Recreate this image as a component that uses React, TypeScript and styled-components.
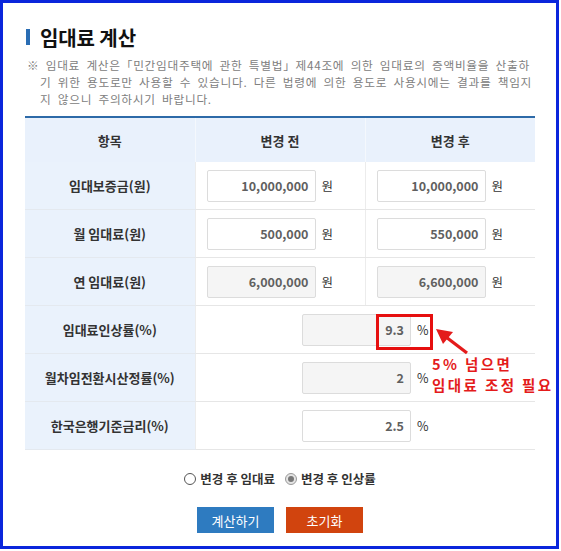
import React from "react";
import styled, { createGlobalStyle } from "styled-components";

const GlobalStyle = createGlobalStyle`
	html, body {
		margin: 0;
		padding: 0;
		background: #ffffff;
	}
	body {
		font-family: "Noto Sans CJK KR", "Noto Sans", sans-serif;
	}
`;

const Frame = styled.div`
	box-sizing: border-box;
	width: 559px;
	height: 549px;
	border: 3px solid #0a26dc;
	padding: 21px 0 0 22px;
`;

const TitleRow = styled.div`
	display: flex;
	align-items: center;
	gap: 10px;
	height: 26px;
`;

const TitleBar = styled.span`
	display: block;
	width: 4px;
	height: 16px;
	background: #2a6db4;
	margin-left: 1px;
`;

const Title = styled.h2`
	margin: 0;
	font-size: 20px;
	font-weight: 700;
	color: #111;
	letter-spacing: -0.1px;
`;

const Notice = styled.p`
	margin: 6px 0 0 2px;
	padding-left: 13px;
	text-indent: -13px;
	font-size: 11.7px;
	line-height: 17px;
	letter-spacing: 0.7px;
	word-spacing: 3px;
	color: #808080;
	white-space: nowrap;
`;

const Table = styled.table`
	margin-top: 9px;
	width: 510px;
	border-collapse: collapse;
	border-top: 2px solid #2d6aa8;
	table-layout: fixed;
`;

const HeadCell = styled.th`
	height: 44px;
	padding: 0;
	background: #e9f1fc;
	font-size: 13px;
	font-weight: 700;
	color: #333;
	border-left: 1px solid #f4f8fd;
	&:first-child {
		border-left: none;
	}
`;

const LabelCell = styled.td`
	height: 47px;
	padding: 0;
	background: #eaf2fc;
	text-align: center;
	font-size: 13px;
	font-weight: 700;
	color: #333;
	border-bottom: 1px solid #e4e9ef;
`;

const ValueCell = styled.td<{ $center?: boolean }>`
	height: 47px;
	padding: 0 0 0 ${(p) => (p.$center ? "0" : "11px")};
	text-align: ${(p) => (p.$center ? "center" : "left")};
	border-bottom: 1px solid #e6e6e6;
	border-left: 1px solid #ececec;
`;

const Field = styled.span`
	position: relative;
	display: inline-flex;
	align-items: center;
	gap: 6px;
`;

const NumInput = styled.input<{ $gray?: boolean }>`
	box-sizing: border-box;
	width: 109px;
	height: 32px;
	border: 1px solid #dcdcdc;
	border-radius: 2px;
	background: ${(p) => (p.$gray ? "#f5f5f5" : "#ffffff")};
	padding: 0 6px 0 4px;
	text-align: right;
	font-family: "Noto Sans CJK KR", "Noto Sans", sans-serif;
	font-size: 12.5px;
	font-weight: 700;
	color: #606060;
	outline: none;
`;

const Unit = styled.span`
	font-size: 12.5px;
	color: #333;
`;

const RedBox = styled.span`
	position: absolute;
	left: 74px;
	top: 0px;
	width: 57px;
	height: 36px;
	box-sizing: border-box;
	border: 3px solid #e60f0f;
	pointer-events: none;
`;

const Arrow = styled.svg`
	position: absolute;
	left: 130px;
	top: 10px;
`;

const Callout = styled.div`
	position: absolute;
	left: 130px;
	top: 39px;
	font-size: 14.5px;
	font-weight: 700;
	line-height: 21px;
	letter-spacing: 2.4px;
	color: #e41b1b;
	white-space: nowrap;
	text-align: left;
`;

const RadioRow = styled.div`
	display: flex;
	justify-content: center;
	align-items: center;
	gap: 10px;
	width: 510px;
	margin-top: 19px;
`;

const RadioLabel = styled.label`
	display: inline-flex;
	align-items: center;
	gap: 4px;
	font-size: 12.5px;
	font-weight: 700;
	color: #333;
`;

const RadioDot = styled.span<{ $checked?: boolean }>`
	position: relative;
	display: inline-block;
	box-sizing: border-box;
	width: 12px;
	height: 12px;
	border-radius: 50%;
	border: 1px solid ${(p) => (p.$checked ? "#999" : "#555")};
	background: ${(p) => (p.$checked ? "#e4e4e4" : "#fff")};
	&::after {
		content: "";
		display: ${(p) => (p.$checked ? "block" : "none")};
		position: absolute;
		left: 2px;
		top: 2px;
		width: 6px;
		height: 6px;
		border-radius: 50%;
		background: #777;
	}
`;

const ButtonRow = styled.div`
	display: flex;
	justify-content: center;
	gap: 12px;
	width: 510px;
	margin-top: 19px;
`;

const ActionButton = styled.button<{ $color: string }>`
	width: 77px;
	height: 26px;
	border: none;
	padding: 0;
	background: ${(p) => p.$color};
	color: #fff;
	font-family: "Noto Sans CJK KR", "Noto Sans", sans-serif;
	font-size: 13px;
`;

type MoneyRow = {
	label: string;
	before: string;
	after: string;
	gray?: boolean;
};

const moneyRows: MoneyRow[] = [
	{ label: "임대보증금(원)", before: "10,000,000", after: "10,000,000" },
	{ label: "월 임대료(원)", before: "500,000", after: "550,000" },
	{ label: "연 임대료(원)", before: "6,000,000", after: "6,600,000", gray: true },
];

const App = (): JSX.Element => (
	<>
		<GlobalStyle />
		<Frame>
			<TitleRow>
				<TitleBar />
				<Title>임대료 계산</Title>
			</TitleRow>
			<Notice>
				※ 임대료 계산은「민간임대주택에 관한 특별법」제44조에 의한 임대료의 증액비율을 산출하
				<br />
				기 위한 용도로만 사용할 수 있습니다. 다른 법령에 의한 용도로 사용시에는 결과를 책임지
				<br />
				지 않으니 주의하시기 바랍니다.
			</Notice>
			<Table>
				<thead>
					<tr>
						<HeadCell>항목</HeadCell>
						<HeadCell>변경 전</HeadCell>
						<HeadCell>변경 후</HeadCell>
					</tr>
				</thead>
				<tbody>
					{moneyRows.map((row) => (
						<tr key={row.label}>
							<LabelCell>{row.label}</LabelCell>
							<ValueCell>
								<Field>
									<NumInput readOnly value={row.before} $gray={row.gray} />
									<Unit>원</Unit>
								</Field>
							</ValueCell>
							<ValueCell>
								<Field>
									<NumInput readOnly value={row.after} $gray={row.gray} />
									<Unit>원</Unit>
								</Field>
							</ValueCell>
						</tr>
					))}
					<tr>
						<LabelCell>임대료인상률(%)</LabelCell>
						<ValueCell colSpan={2} $center>
							<Field>
								<NumInput readOnly value="9.3" $gray />
								<Unit>%</Unit>
								<RedBox />
								<Arrow width="40" height="32" viewBox="0 0 40 32">
									<line x1="14" y1="13" x2="35" y2="29" stroke="#e41b1b" strokeWidth="3.2" />
									<polygon points="4,5 21,8 11,20" fill="#e41b1b" />
								</Arrow>
								<Callout>
									5% 넘으면
									<br />
									임대료 조정 필요
								</Callout>
							</Field>
						</ValueCell>
					</tr>
					<tr>
						<LabelCell>월차임전환시산정률(%)</LabelCell>
						<ValueCell colSpan={2} $center>
							<Field>
								<NumInput readOnly value="2" $gray />
								<Unit>%</Unit>
							</Field>
						</ValueCell>
					</tr>
					<tr>
						<LabelCell>한국은행기준금리(%)</LabelCell>
						<ValueCell colSpan={2} $center>
							<Field>
								<NumInput readOnly value="2.5" />
								<Unit>%</Unit>
							</Field>
						</ValueCell>
					</tr>
				</tbody>
			</Table>
			<RadioRow>
				<RadioLabel>
					<RadioDot />
					변경 후 임대료
				</RadioLabel>
				<RadioLabel>
					<RadioDot $checked />
					변경 후 인상률
				</RadioLabel>
			</RadioRow>
			<ButtonRow>
				<ActionButton $color="#2e7bc0">계산하기</ActionButton>
				<ActionButton $color="#d1440e">초기화</ActionButton>
			</ButtonRow>
		</Frame>
	</>
);

export default App;
